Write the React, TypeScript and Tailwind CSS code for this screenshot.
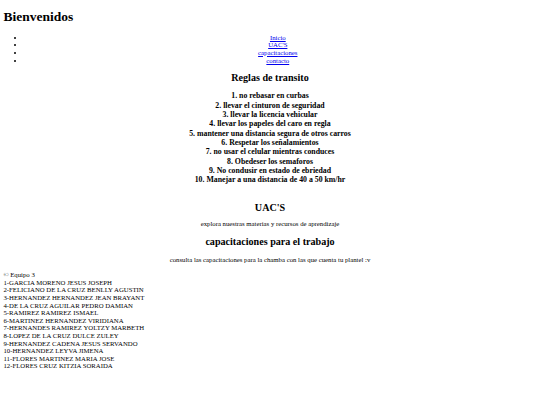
import React from "react";

const rules = [
  "1. no rebasar en curbas",
  "2. llevar el cinturon de seguridad",
  "3. llevar la licencia vehicular",
  "4. llevar los papeles del caro en regla",
  "5. mantener una distancia segura de otros carros",
  "6. Respetar los señalamientos",
  "7. no usar el celular mientras conduces",
  "8. Obedeser los semaforos",
  "9. No condusir en estado de ebriedad",
  "10. Manejar a una distancia de 40 a 50 km/hr",
];

const team = [
  "1-GARCIA MORENO JESUS JOSEPH",
  "2-FELICIANO DE LA CRUZ BENLLY AGUSTIN",
  "3-HERNANDEZ HERNANDEZ JEAN BRAYANT",
  "4-DE LA CRUZ AGUILAR PEDRO DAMIAN",
  "5-RAMIREZ RAMIREZ ISMAEL",
  "6-MARTINEZ HERNANDEZ VIRIDIANA",
  "7-HERNANDES RAMIREZ YOLTZY MARBETH",
  "8-LOPEZ DE LA CRUZ DULCE ZULEY",
  "9-HERNANDEZ CADENA JESUS SERVANDO",
  "10-HERNANDEZ LEYVA JIMENA",
  "11-FLORES MARTINEZ MARIA JOSE",
  "12-FLORES CRUZ KITZIA SORAIDA",
];

const links = ["Inicio", "UAC'S", "capacitaciones", "contacto"];

export default function App() {
  return (
    <div
      className="min-h-[405px] w-[540px] bg-white px-[3.4px] text-black"
      style={{ fontFamily: '"Liberation Serif", "Times New Roman", serif' }}
    >
      <h1 className="mt-[9px] text-[13.5px] font-bold leading-[15.5px]">Bienvenidos</h1>
      <ul className="mt-[9px] list-disc pl-[21.6px] pr-[6px] text-[6.75px] leading-[7.7px]">
        {links.map((l) => (
          <li key={l} className="text-center">
            <a href="#" className="text-[#0000ee] underline">
              {l}
            </a>
          </li>
        ))}
      </ul>
      <h2 className="mt-[7.9px] text-center text-[10.1px] font-bold leading-[11.6px]">
        Reglas de transito
      </h2>
      <div className="mt-[7.5px] text-center text-[7.8px] font-bold leading-[9.35px]">
        {rules.map((r) => (
          <div key={r}>{r}</div>
        ))}
      </div>
      <h2 className="mt-[17.5px] text-center text-[10.1px] font-bold leading-[11.6px]">
        UAC'S
      </h2>
      <p className="mt-[6.35px] text-center text-[6.75px] leading-[7.7px]">
        explora nuestras materias y recursos de aprendizaje
      </p>
      <h2 className="mt-[8.35px] text-center text-[10.1px] font-bold leading-[11.6px]">
        capacitaciones para el trabajo
      </h2>
      <p className="mt-[8.35px] text-center text-[6.75px] leading-[7.7px]">
        consulta las capacitaciones para la chamba con las que cuenta tu plantel :v
      </p>
      <footer className="mt-[7.3px] text-[6.75px] leading-[7.6px]">
        <div>© Equipo 3</div>
        {team.map((t) => (
          <div key={t}>{t}</div>
        ))}
      </footer>
    </div>
  );
}
